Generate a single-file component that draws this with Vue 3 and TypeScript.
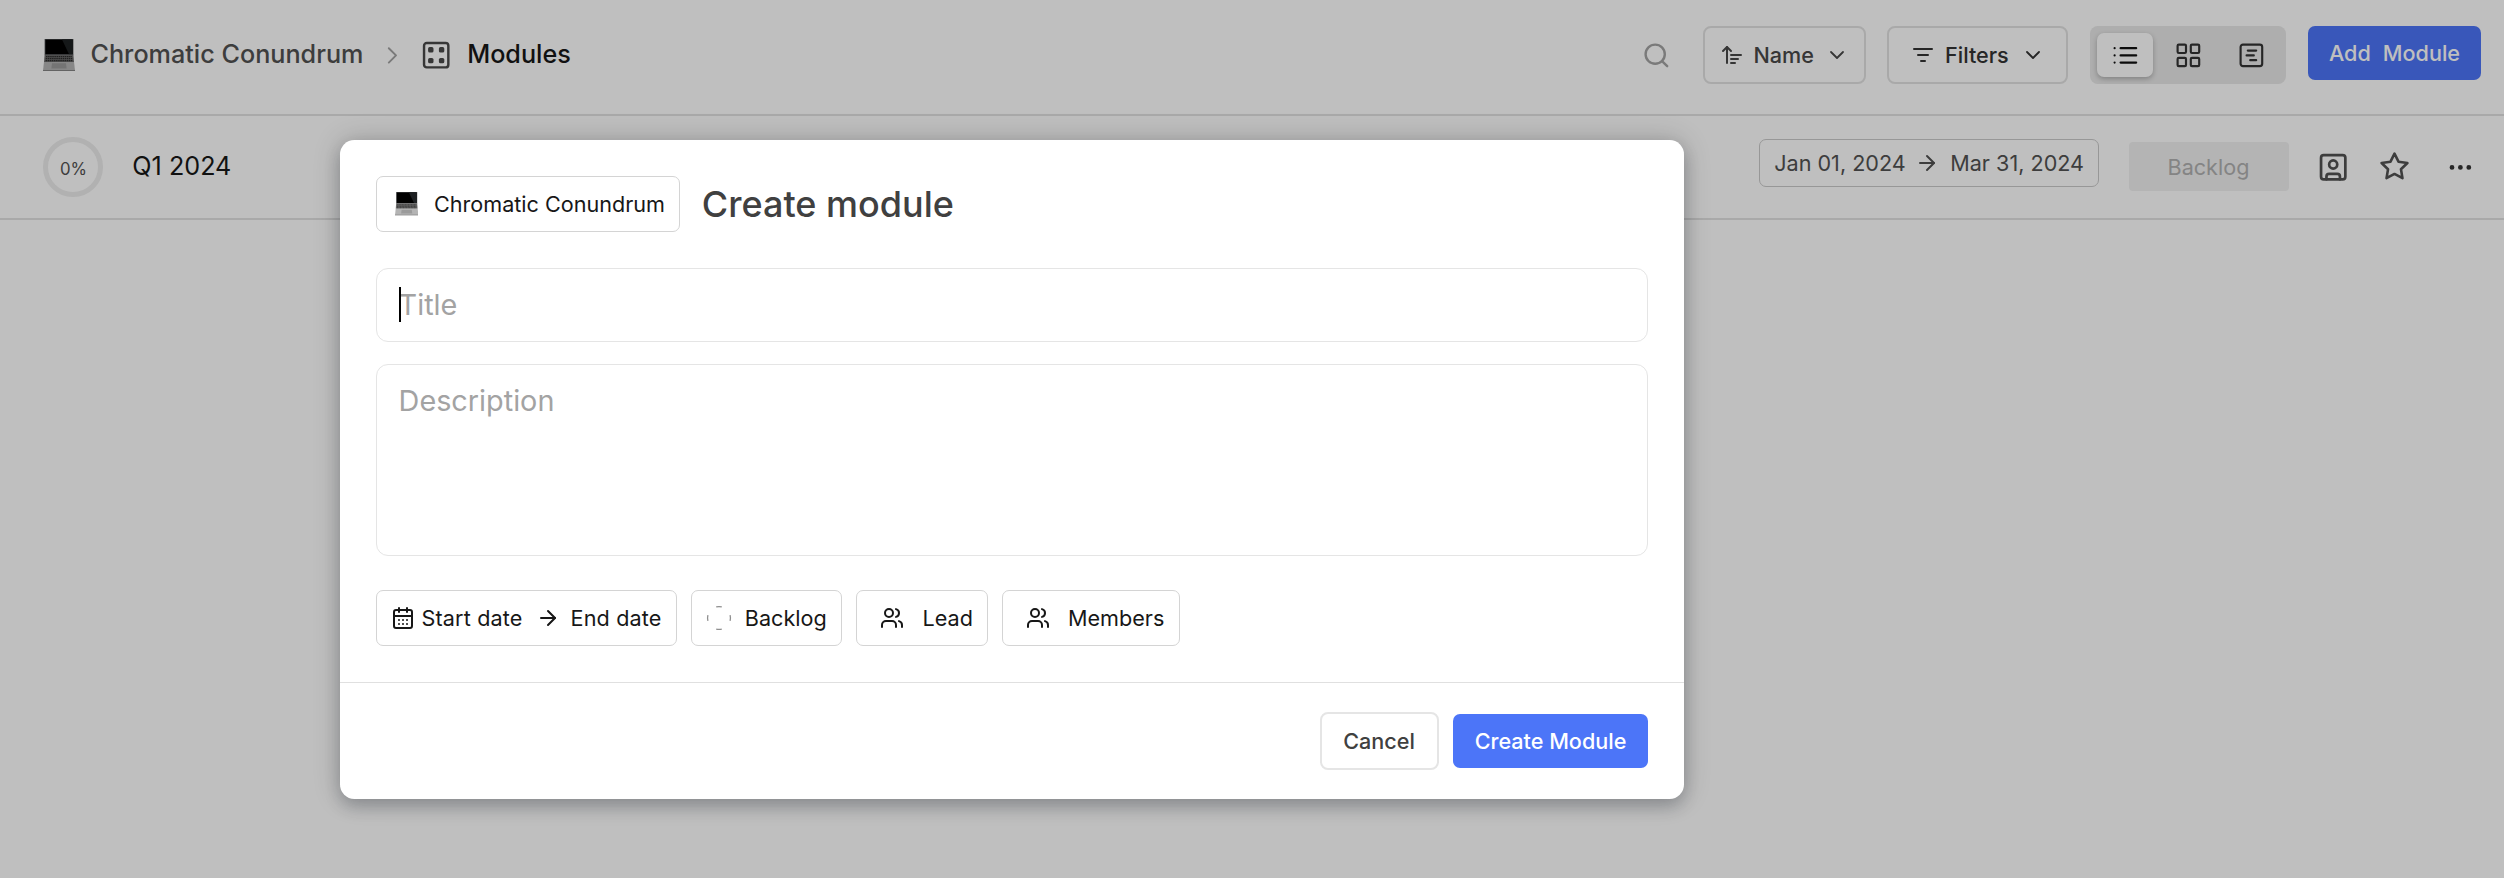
<script setup lang="ts">
import { defineComponent, h, ref } from 'vue'

const icons: Record<string, string> = {
  chevronRight: '<path d="m9 18 6-6-6-6"/>',
  chevronDown: '<path d="m6 9 6 6 6-6"/>',
  arrowRight: '<path d="M5 12h14"/><path d="m12 5 7 7-7 7"/>',
  dice: '<rect x="3" y="3" width="18" height="18" rx="2"/><g fill="currentColor" stroke="none"><rect x="6" y="6" width="4" height="4" rx="1.2"/><rect x="14" y="6" width="4" height="4" rx="1.2"/><rect x="6" y="14" width="4" height="4" rx="1.2"/><rect x="14" y="14" width="4" height="4" rx="1.2"/></g>',
  search: '<circle cx="11" cy="11" r="8"/><path d="m21 21-4.3-4.3"/>',
  sort: '<path d="m3 8 4-4 4 4"/><path d="M7 4v16"/><path d="M11 12h10"/><path d="M11 16h7"/><path d="M11 20h4"/>',
  filter: '<path d="M3 6h18"/><path d="M7 12h10"/><path d="M10 18h4"/>',
  list: '<path d="M8 6h13"/><path d="M8 12h13"/><path d="M8 18h13"/><path d="M3 6h.01"/><path d="M3 12h.01"/><path d="M3 18h.01"/>',
  grid: '<rect x="3" y="3" width="7" height="7" rx="1"/><rect x="14" y="3" width="7" height="7" rx="1"/><rect x="14" y="14" width="7" height="7" rx="1"/><rect x="3" y="14" width="7" height="7" rx="1"/>',
  gantt: '<rect x="3" y="3" width="18" height="18" rx="2"/><path d="M9 8h7"/><path d="M8 12h6"/><path d="M11 16h5"/>',
  userSquare: '<rect x="3" y="3" width="18" height="18" rx="2"/><circle cx="12" cy="10" r="3"/><path d="M7 21v-2a2 2 0 0 1 2-2h6a2 2 0 0 1 2 2v2"/>',
  star: '<path d="m12 2 3.09 6.26L22 9.27l-5 4.87 1.18 6.88L12 17.77l-6.18 3.25L7 14.14 2 9.27l6.91-1.01z"/>',
  dots: '<circle cx="12" cy="12" r="1"/><circle cx="19" cy="12" r="1"/><circle cx="5" cy="12" r="1"/>',
  calendar: '<rect x="3" y="4" width="18" height="18" rx="2"/><path d="M16 2v4"/><path d="M8 2v4"/><path d="M3 10h18"/><path d="M8 14h.01"/><path d="M12 14h.01"/><path d="M16 14h.01"/><path d="M8 18h.01"/><path d="M12 18h.01"/><path d="M16 18h.01"/>',
  users: '<path d="M16 21v-2a4 4 0 0 0-4-4H6a4 4 0 0 0-4 4v2"/><circle cx="9" cy="7" r="4"/><path d="M22 21v-2a4 4 0 0 0-3-3.87"/><path d="M16 3.13a4 4 0 0 1 0 7.75"/>',
  backlog: '<g stroke-linecap="butt"><path d="M9.2 .9a11.4 11.4 0 0 1 5.6 0"/><path d="M23.1 9.2a11.4 11.4 0 0 1 0 5.6"/><path d="M14.8 23.1a11.4 11.4 0 0 1-5.6 0"/><path d="M.9 14.8a11.4 11.4 0 0 1 0-5.6"/></g>',
}

const Icon = defineComponent({
  props: {
    name: { type: String, required: true },
    size: { type: Number, default: 24 },
    weight: { type: Number, default: 2 },
  },
  setup: (p) => () =>
    h('svg', {
      width: p.size, height: p.size, viewBox: '0 0 24 24', fill: 'none', stroke: 'currentColor',
      'stroke-width': p.weight, 'stroke-linecap': 'round', 'stroke-linejoin': 'round',
      style: 'display:block;flex:none;overflow:visible', innerHTML: icons[p.name],
    }),
})

const Laptop = defineComponent({
  props: { size: { type: Number, required: true } },
  setup: (p) => () =>
    h('svg', {
      width: p.size, height: p.size, viewBox: '0 0 32 32', style: 'display:block;flex:none',
      innerHTML:
        '<path d="M1.6 0h28.8v16H1.6z" fill="#55585a"/><path d="M2.4 .6h27.2v14.6H2.4z" fill="#000"/>' +
        '<path d="M19 .6h10.6v14.6H26z" fill="#1d2022"/>' +
        '<path d="M1.6 15.8h28.8L31 23H1z" fill="#6a6a6a"/>' +
        '<path d="M3 17.6h26M2.8 19.6h26.4M2.6 21.6h26.8" stroke="#2c2c2c" stroke-width="1.1" stroke-dasharray="1.5 .6"/>' +
        '<path d="M1 23h30l1 8.4H0z" fill="#b4b4b4"/><path d="M9 24.2h14l.6 5.2H8.4z" fill="#9b9b9b"/>' +
        '<path d="M0 31h32v1H0z" fill="#858585"/>',
    }),
})

const layouts = ['list', 'grid', 'gantt']
const activeLayout = ref('list')
const title = ref('')
const description = ref('')
</script>

<template>
  <div class="screen">
    <header class="topbar">
      <nav class="crumbs">
        <Laptop :size="32" />
        <span class="project">Chromatic Conundrum</span>
        <Icon class="sep" name="chevronRight" :size="28.8" :weight="1.6" />
        <Icon class="dice" name="dice" :size="32.4" :weight="1.8" />
        <span class="current">Modules</span>
      </nav>
      <div class="tools">
        <Icon class="search" name="search" :size="28.8" />
        <button class="outline sort"><Icon name="sort" /><span>Name</span><Icon name="chevronDown" :weight="1.8" /></button>
        <button class="outline filters"><Icon name="filter" /><span>Filters</span><Icon name="chevronDown" :weight="1.8" /></button>
        <div class="layouts">
          <button v-for="l in layouts" :key="l" :class="{ active: l === activeLayout }" @click="activeLayout = l">
            <Icon :name="l" :size="28.8" :weight="1.8" />
          </button>
        </div>
        <button class="primary add"><span>Add</span><span>Module</span></button>
      </div>
    </header>

    <section class="row">
      <div class="ring">0%</div>
      <span class="name">Q1 2024</span>
      <div class="meta">
        <div class="dates"><span>Jan 01, 2024</span><Icon name="arrowRight" /><span>Mar 31, 2024</span></div>
        <div class="status">Backlog</div>
        <Icon class="member" name="userSquare" :size="32.4" />
        <Icon class="star" name="star" :size="31" />
        <Icon class="more" name="dots" :size="28.8" />
      </div>
    </section>

    <div class="backdrop">
      <form class="modal" @submit.prevent>
        <div class="body">
          <div class="heading">
            <button type="button" class="chip project-chip"><Laptop :size="23.4" /><span>Chromatic Conundrum</span></button>
            <h3>Create module</h3>
          </div>
          <div class="field">
            <input v-model="title" placeholder="Title" />
            <i class="caret"></i>
          </div>
          <textarea v-model="description" placeholder="Description"></textarea>
          <div class="chips">
            <button type="button" class="chip range">
              <Icon name="calendar" /><span class="start">Start date</span><Icon name="arrowRight" /><span class="end">End date</span>
            </button>
            <button type="button" class="chip state"><Icon class="dash" name="backlog" :weight="1.3" /><span>Backlog</span></button>
            <button type="button" class="chip lead"><Icon name="users" /><span>Lead</span></button>
            <button type="button" class="chip members"><Icon name="users" /><span>Members</span></button>
          </div>
        </div>
        <footer>
          <button type="button" class="cancel">Cancel</button>
          <button type="submit" class="primary create">Create Module</button>
        </footer>
      </form>
    </div>
  </div>
</template>

<style>
body { margin: 0; background: #fff; overflow: hidden; }
</style>

<style scoped>
* { box-sizing: border-box; }
.screen {
  position: relative; width: 100%; height: 100vh; min-height: 878px; background: #fff;
  font-family: Inter, "Liberation Sans", sans-serif; font-size: 21.6px; color: #171717;
}
.screen span { white-space: nowrap; }
button { font: inherit; color: inherit; margin: 0; padding: 0; background: none; border: 0; display: flex; align-items: center; text-align: left; }

.topbar { display: flex; justify-content: space-between; height: 116px; padding: 26px 23px 0 43px; border-bottom: 2px solid #e2e2e2; }
.crumbs { display: flex; align-items: center; height: 58px; font-size: 25.2px; font-weight: 500; }
.project { width: 273.5px; margin: -2px 0 0 15.5px; color: #525252; }
.sep { margin-left: 13.6px; color: #a3a3a3; }
.dice { margin-left: 13.4px; color: #484848; }
.current { margin: -2px 0 0 15px; }

.tools { display: flex; align-items: flex-start; font-weight: 500; }
.search { margin: 15px 32.6px 0 0; color: #a3a3a3; }
.outline { height: 58px; border: 2px solid #e2e2e2; border-radius: 8px; color: #484848; }
.sort { width: 163px; padding-left: 15px; margin-right: 21px; }
.sort span { width: 71.5px; margin-left: 9.5px; }
.filters { width: 181px; padding-left: 22px; margin-right: 22px; color: #333; }
.filters span { width: 76px; margin-left: 10px; }
.layouts { display: flex; gap: 7px; height: 58px; width: 196px; padding: 7px; margin-right: 22px; background: #e8e8e8; border-radius: 8px; }
.layouts button { width: 56px; height: 44px; justify-content: center; border-radius: 7px; color: #333; }
.layouts .active { background: #fff; color: #111; box-shadow: 0 2px 5px rgba(0, 0, 0, .25); }
.primary { background: #4c75f8; color: #fff; font-weight: 500; border-radius: 7px; height: 54px; justify-content: center; }
.add { width: 173px; gap: 12px; }

.row { display: flex; align-items: center; height: 104px; padding: 0 29.6px 0 43px; border-bottom: 2px solid #e2e2e2; }
.ring { width: 60px; height: 60px; border: 5px solid #ececec; border-radius: 50%; display: flex; align-items: center; justify-content: center; font-size: 16.8px; color: #525252; padding: 3px 0 0 1px; }
.name { margin: -2px 0 0 29.3px; font-size: 25.2px; }
.meta { display: flex; align-items: center; margin-left: auto; color: #525252; }
.dates { display: flex; align-items: center; width: 340px; height: 48px; padding-left: 14px; margin: 0 29.5px 8px 0; border: 1px solid #cacaca; border-radius: 7px; }
.dates svg { margin: 0 11.5px 0 auto; }
.dates span:last-child { width: 148px; }
.status { width: 160.5px; height: 49px; margin: 0 28px 1px 0; padding: 1px 1px 0 0; display: flex; align-items: center; justify-content: center; background: #f1f1f1; color: #b0b0b0; border-radius: 4px; }
.star { margin: 0 36px 2px 29px; }
.more { color: #333; }

.backdrop { position: absolute; inset: 0; padding-top: 140px; background: rgba(0, 0, 0, .25); }
.modal { width: 1344px; height: 659px; margin-left: 340px; display: flex; flex-direction: column; background: #fff; border-radius: 14.4px; box-shadow: 0 8px 16px rgba(16, 24, 40, .2), 0 0 28px rgba(0, 0, 0, .2); }
.body { flex: 1; padding: 36px; }
.heading { display: flex; align-items: center; }
.chip { height: 56px; border: 1px solid #d4d4d4; border-radius: 7px; }
.project-chip { width: 304px; padding-left: 18px; }
.project-chip span { margin-left: 15.6px; }
h3 { margin: 0 0 0 21.8px; font-size: 36px; line-height: 44px; font-weight: 500; color: #404040; }
.field { position: relative; margin-top: 36px; }
input, textarea { display: block; width: 100%; margin: 0; font: inherit; font-size: 28.8px; line-height: 36px; border: 1px solid #e5e5e5; border-radius: 12px; background: #fff; outline: none; resize: none; color: #171717; }
input { height: 74px; padding: 0 21.6px 2px; }
textarea { height: 192px; margin-top: 22px; padding: 17.5px 21.6px; }
input::placeholder, textarea::placeholder { color: #a3a3a3; opacity: 1; }
.caret { position: absolute; left: 23px; top: 19px; width: 2px; height: 35px; background: #000; }
.chips { display: flex; gap: 14px; margin-top: 34px; }
.range { width: 301px; padding-left: 14px; letter-spacing: .15px; }
.start { width: 105px; margin-left: 6.5px; }
.end { margin-left: 10.5px; }
.range svg:nth-of-type(2) { margin-left: 9.5px; }
.state { width: 151px; padding-left: 15px; }
.dash { color: #8f8f8f; }
.state span { margin-left: 13.8px; }
.lead { width: 132px; padding-left: 23px; }
.members { width: 178px; padding-left: 22.5px; }
.lead span, .members span { margin-left: 18.5px; }
footer { display: flex; align-items: center; justify-content: flex-end; gap: 14.4px; height: 117px; padding: 0 36px; border-top: 1px solid #e0e0e0; }
.cancel { width: 119px; height: 58px; justify-content: center; border: 2px solid #e5e5e5; border-radius: 8px; font-weight: 500; color: #404040; }
.create { width: 195px; }
</style>
